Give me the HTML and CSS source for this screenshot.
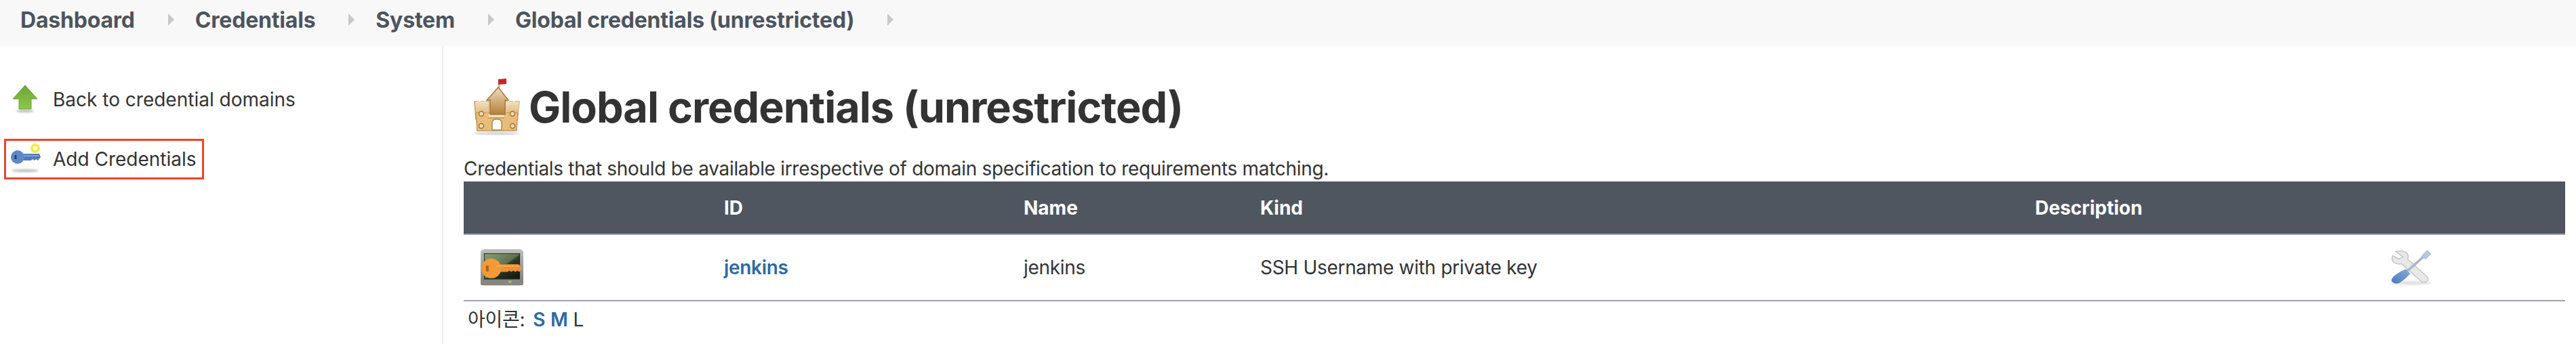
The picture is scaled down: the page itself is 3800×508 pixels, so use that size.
FILE: index.html
```html
<!DOCTYPE html>
<html lang="ko">
<head>
<meta charset="utf-8">
<title>Global credentials (unrestricted)</title>
<link rel="stylesheet" href="styles.css">
</head>
<body>
<svg class="defs" width="0" height="0" aria-hidden="true">
  <defs>
    <filter id="soft" x="-10%" y="-10%" width="120%" height="120%"><feGaussianBlur stdDeviation="0.7"/></filter>
    <filter id="shade" x="-20%" y="-100%" width="140%" height="300%"><feGaussianBlur stdDeviation="1.6"/></filter>
    <linearGradient id="green" x1="0" y1="0" x2="0" y2="1"><stop offset="0" stop-color="#6ba53f"/><stop offset="1" stop-color="#8fc743"/></linearGradient>
    <linearGradient id="tower" x1="0" y1="0" x2="0" y2="1"><stop offset="0" stop-color="#eddcc0"/><stop offset="1" stop-color="#b57f36"/></linearGradient>
    <linearGradient id="wall" x1="0" y1="0" x2="0" y2="1"><stop offset="0" stop-color="#efe0c6"/><stop offset="1" stop-color="#e4bd82"/></linearGradient>
    <linearGradient id="screen" x1="0" y1="0" x2="1" y2="1"><stop offset="0" stop-color="#86a072"/><stop offset=".5" stop-color="#5c7250"/><stop offset=".55" stop-color="#2f3a28"/><stop offset="1" stop-color="#11150f"/></linearGradient>
    <linearGradient id="case" x1="0" y1="0" x2="0" y2="1"><stop offset="0" stop-color="#bdbdba"/><stop offset="1" stop-color="#7c7c79"/></linearGradient>
    <linearGradient id="handle" x1="0" y1="1" x2="1" y2="0"><stop offset="0" stop-color="#4a7bbd"/><stop offset="1" stop-color="#86acdb"/></linearGradient>
  </defs>
</svg>

<nav class="crumbs">
  <a class="crumb">Dashboard</a><i class="sep"></i>
  <a class="crumb">Credentials</a><i class="sep"></i>
  <a class="crumb">System</a><i class="sep"></i>
  <a class="crumb">Global credentials (unrestricted)</a><i class="sep"></i>
</nav>

<div class="page">
  <aside class="side">
    <div class="task">
      <svg class="task-icon" viewBox="0 0 48 48">
        <ellipse cx="22" cy="41" rx="13" ry="2" fill="#bbb" filter="url(#shade)"/>
        <path d="M22 3 40 23H31V38H13V23H4Z" fill="url(#green)" stroke="#6b9e3c" stroke-width="1" filter="url(#soft)"/>
      </svg>
      <span>Back to credential domains</span>
    </div>
    <div class="task task-add">
      <svg class="task-icon" viewBox="0 0 48 48">
        <ellipse cx="22" cy="41" rx="20" ry="2" fill="#bbb" filter="url(#shade)"/>
        <g filter="url(#soft)">
          <circle cx="37" cy="8" r="5" fill="none" stroke="#f3ec4a" stroke-width="4"/>
          <path d="M19 16H43L45 21 41 26 38 24 36 26 33 24 31 26H19Z" fill="#4f7cbd"/>
          <ellipse cx="11" cy="21" rx="10" ry="10" fill="#5b88c8"/>
          <rect x="6.500" y="18" width="3" height="6" fill="#25406b"/>
          <path d="M20 19H42" stroke="#8db0de" stroke-width="1.500"/>
        </g>
      </svg>
      <span>Add Credentials</span>
    </div>
  </aside>

  <main class="content">
    <h1 class="title">
      <svg class="title-icon" viewBox="0 0 72 84">
        <ellipse cx="36" cy="81" rx="34" ry="2" fill="#ccc" filter="url(#shade)"/>
        <g filter="url(#soft)">
          <path d="M39 1 51 0V8L39 9Z" fill="#c4252b"/>
          <path d="M40 9V14" stroke="#a78a62" stroke-width="1.500"/>
          <path d="M4 34H10V39H14V34H18V39H21V34H25V60H6Z" fill="url(#wall)" stroke="#c99a5a" stroke-width="1.500"/>
          <path d="M47 34H52V39H56V34H60V39H64V34H70L67 60H47Z" fill="url(#wall)" stroke="#c99a5a" stroke-width="1.500"/>
          <path d="M6 50H68L66 77H8Z" fill="#e8bd7c" stroke="#c9964f" stroke-width="1.500"/>
          <path d="M6 34H25V50H7ZM48 34H70L68 50H48Z" fill="url(#wall)"/>
          <path d="M25 52H48V57H25Z" fill="#f4e4c8"/>
          <path d="M25 58H48" stroke="#c9964f" stroke-width="1.500"/>
          <path d="M39 13 54 32H49V53H27V32H22Z" fill="url(#tower)" stroke="#a8793a" stroke-width="1.500"/>
          <path d="M30 76V65Q30 60 37 60T44 65V76Z" fill="#fff" stroke="#b0844a" stroke-width="1.500"/>
          <circle cx="14" cy="52" r="3.500" fill="#f2dcb6" stroke="#a0712f" stroke-width="1.500"/>
          <circle cx="14" cy="70" r="3.500" fill="#f2dcb6" stroke="#a0712f" stroke-width="1.500"/>
          <circle cx="60" cy="52" r="3.500" fill="#f2dcb6" stroke="#a0712f" stroke-width="1.500"/>
          <circle cx="60" cy="70" r="3.500" fill="#f2dcb6" stroke="#a0712f" stroke-width="1.500"/>
        </g>
      </svg>
      <span class="title-text">Global credentials (unrestricted)</span>
    </h1>
    <p class="desc">Credentials that should be available irrespective of domain specification to requirements matching.</p>
    <table class="grid">
      <colgroup>
        <col class="c-icon"><col class="c-id"><col class="c-name"><col class="c-kind"><col class="c-desc"><col class="c-act">
      </colgroup>
      <thead>
        <tr><th></th><th>ID</th><th>Name</th><th>Kind</th><th>Description</th><th></th></tr>
      </thead>
      <tbody>
        <tr>
          <td>
            <svg class="row-icon" viewBox="0 0 64 64" preserveAspectRatio="none">
              <g filter="url(#soft)">
                <rect x="0" y="0" width="64" height="62" rx="6" fill="url(#case)"/>
                <rect x="5" y="7" width="54" height="45" fill="#20251c"/>
                <rect x="6" y="8" width="52" height="42" fill="url(#screen)"/>
                <rect x="0" y="52" width="64" height="10" rx="3" fill="#858582"/>
                <rect x="42" y="54" width="4" height="4" fill="#9cc36a"/>
                <path d="M22 26H57L62 32 58 39 55 37 52 39 49 37 46 39 43 37 40 39H22Z" fill="#ec9135"/>
                <ellipse cx="16" cy="33" rx="15" ry="17" fill="#f09a38"/>
                <rect x="8" y="28" width="4" height="10" fill="#a8601d"/>
                <path d="M24 29H58" stroke="#f5b56b" stroke-width="1.500"/>
              </g>
            </svg>
          </td>
          <td><a class="link strong">jenkins</a></td>
          <td>jenkins</td>
          <td>SSH Username with private key</td>
          <td></td>
          <td>
            <svg class="row-icon" viewBox="0 0 64 64" preserveAspectRatio="none">
              <ellipse cx="32" cy="58" rx="31" ry="3" fill="#dedede" filter="url(#shade)"/>
              <g filter="url(#soft)">
                <path d="M9 4Q21 0 27 8 29 13 27 17L56 47Q60 53 55 56 50 59 46 54L18 25Q11 27 6 22 2 17 5 11L14 17 20 13Z" fill="#e8e8e6" stroke="#c2c2c0" stroke-width="1.500"/>
                <path d="M24 40 50 14" stroke="#a9b8c8" stroke-width="4"/>
                <path d="M48 12 56 2 62 8 54 17Z" fill="#b3cae2" stroke="#9ab0c4"/>
                <path d="M24 34 31 42Q25 50 15 58 7 61 3 55 2 50 9 44Q16 38 24 34Z" fill="url(#handle)"/>
              </g>
            </svg>
          </td>
        </tr>
      </tbody>
    </table>
    <div class="sizes">
      <span class="sizes-label">아이콘:</span>
      <a class="link size">S</a>
      <a class="link size">M</a>
      <span class="size-current">L</span>
    </div>
  </main>
</div>
</body>
</html>
```
FILE: styles.css
```css
* { box-sizing: border-box; }
html, body { margin: 0; padding: 0; background: #fff; }
body {
  font-family: Inter, "Noto Sans CJK KR", sans-serif;
  font-size: 28px;
  color: #333;
  height: 508px;
  overflow: hidden;
}
.defs { position: absolute; }

.crumbs {
  height: 68px;
  background: #f8f8f8;
  display: flex;
  align-items: center;
  padding: 0 0 10px 30px;
  color: #4d545d;
  font-size: 32px;
  font-weight: 700;
  letter-spacing: -0.2px;
}
.crumb { white-space: nowrap; }
.sep {
  width: 0;
  height: 0;
  border-left: 9px solid #c8c8c8;
  border-top: 9px solid transparent;
  border-bottom: 9px solid transparent;
  margin: 0 31px 0 49px;
}

.page { display: flex; height: 440px; }
.side {
  width: 654px;
  flex: none;
  border-right: 2px solid #eef1f4;
  padding: 49px 0 0 6px;
  display: flex;
  flex-direction: column;
  align-items: flex-start;
  gap: 28px;
}
.task {
  display: flex;
  align-items: center;
  height: 60px;
  width: 295px;
  border: 3px solid transparent;
  padding-left: 6px;
  gap: 15px;
  white-space: nowrap;
}
.task-add { border-color: #e9462b; }
.task-icon { width: 48px; height: 48px; flex: none; }

.content { flex: 1; padding: 0 16px 0 30px; min-width: 0; letter-spacing: -0.3px; }
.title {
  margin: 48px 0 0;
  display: flex;
  align-items: center;
  font-size: 63px;
  letter-spacing: -1px;
  font-weight: 700;
  line-height: 84px;
  height: 84px;
  color: #333;
}
.title-icon { width: 72px; height: 84px; flex: none; margin: 0 12px 0 12px; }
.desc { margin: 0; line-height: 34px; padding: 32px 0 2px; height: 68px; }

.grid { width: 3100px; border-collapse: collapse; table-layout: fixed; }
.c-icon { width: 360px; }
.c-id { width: 442px; }
.c-name { width: 349px; }
.c-kind { width: 1143px; }
.c-desc { width: 522px; }
.c-act { width: 284px; }
.grid th {
  background: #505660;
  color: #fff;
  height: 78px;
  padding: 0 24px;
  text-align: left;
  font-weight: 700;
  font-size: 28px;
  letter-spacing: 0;
  border-bottom: 2px solid #9ba7af;
}
.grid td {
  height: 98px;
  padding: 0 24px;
  border-bottom: 2px solid #9ba7af;
  vertical-align: middle;
}
.row-icon { display: block; width: 63px; height: 55px; margin-left: 1px; }
.link { color: #2c6aa3; }
.strong, .size { font-weight: 600; }
.sizes { padding: 10px 0 0 6px; display: flex; align-items: center; line-height: 34px; }
.sizes-label { margin-right: 12px; }
.size { margin-right: 8px; }
```
